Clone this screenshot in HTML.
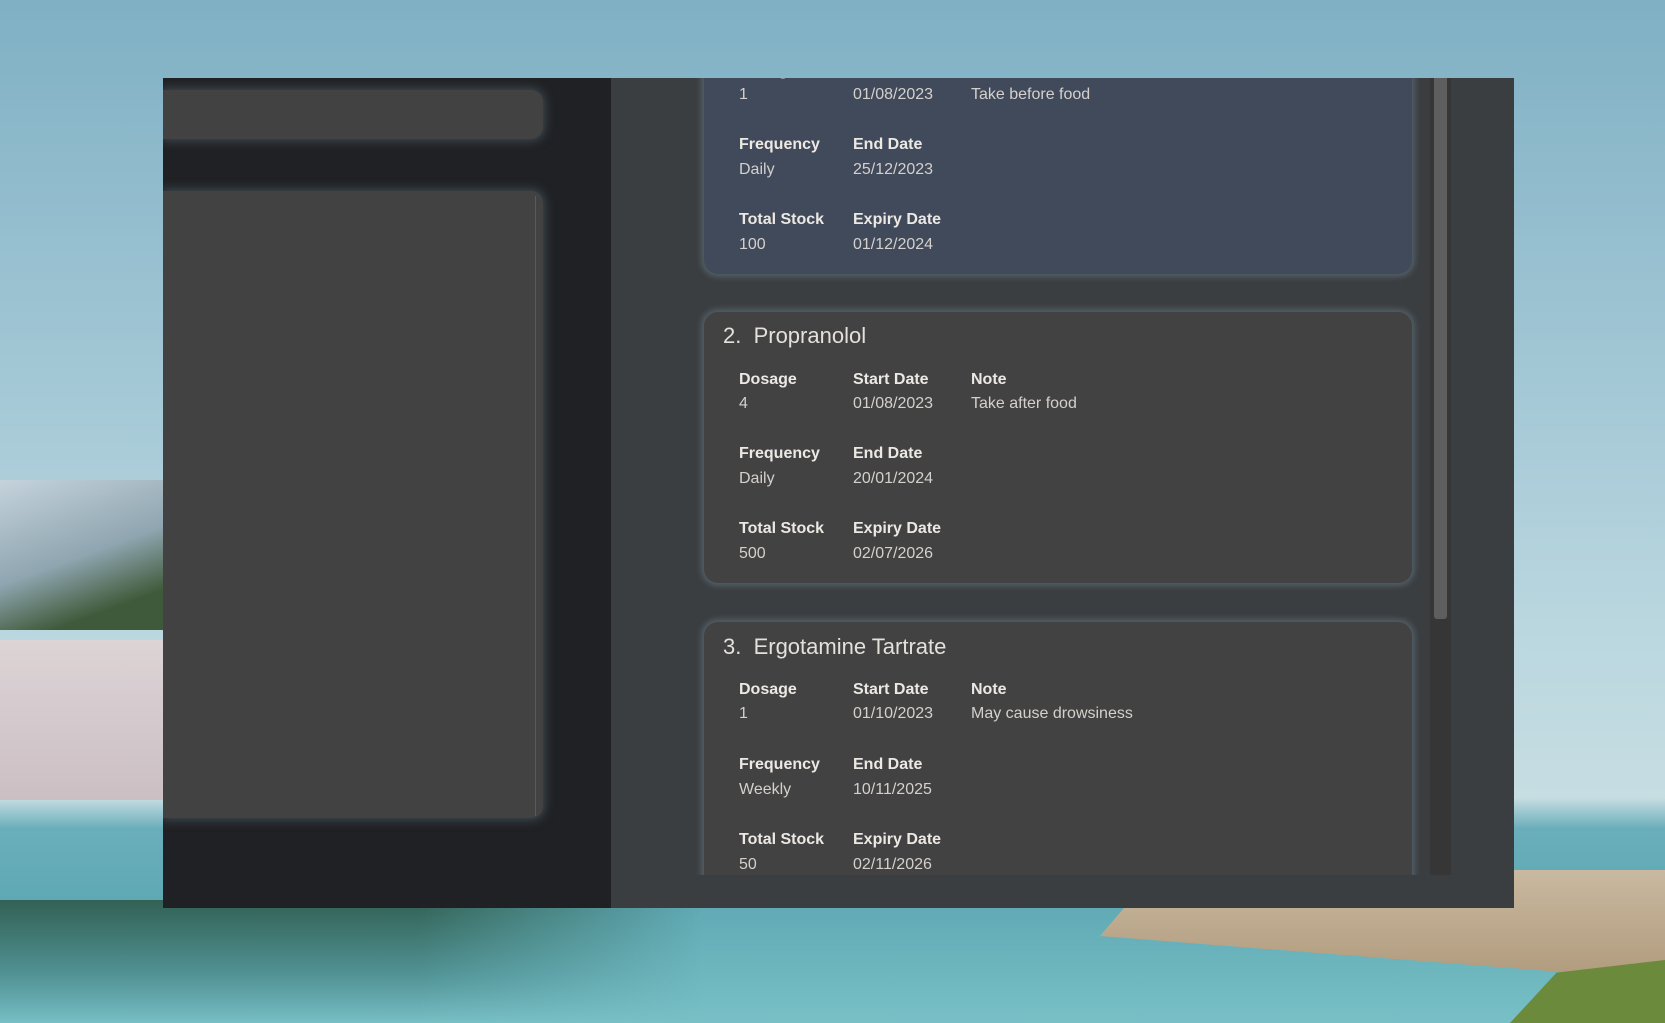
<!DOCTYPE html>
<html><head><meta charset="utf-8"><style>
*{margin:0;padding:0;box-sizing:border-box}
body{width:1665px;height:1023px;overflow:hidden;position:relative;font-family:"Liberation Sans",sans-serif;
background:linear-gradient(180deg,#7fb0c4 0%,#9cc3d2 30%,#b9d6df 60%,#c6dde2 78%,#6aaebb 81%,#5fa9b4 88%,#78c0c6 100%);}
.abs{position:absolute}
.win{left:163px;top:78px;width:1351px;height:830px;overflow:hidden;background:#3b3e41}
.left{left:0;top:0;width:448px;height:830px;background:#202124}
.box{background:#424242;box-shadow:0 0 10px 2px rgba(70,85,95,.8)}
.card{position:absolute;left:93px;width:708px;height:271px;background:#424242;border-radius:14px;box-shadow:0 0 6px 3px rgba(90,105,115,.75)}
.card.sel{background:#414a5a}
.t{position:absolute;left:19px;font-size:22px;color:#e4e0dc;white-space:pre}
.l{position:absolute;font-size:16px;font-weight:bold;color:#ece8e4}
.v{position:absolute;font-size:16px;color:#d4d0cc}
.card .l,.card .v{margin-top:3px}
</style></head><body>
<div class="abs" style="left:0;top:480px;width:170px;height:150px;background:linear-gradient(160deg,#c5d3dc,#8fa5b0 50%,#3f5a3a 80%)"></div>
<div class="abs" style="left:0;top:640px;width:170px;height:160px;background:linear-gradient(180deg,#ddd4d6,#cbbfc4)"></div>
<div class="abs" style="left:0;top:900px;width:700px;height:123px;background:linear-gradient(180deg,rgba(46,90,74,.9),rgba(63,122,120,.6) 60%,rgba(90,166,174,0));-webkit-mask-image:linear-gradient(90deg,#000 60%,transparent)"></div>
<div class="abs" style="left:1100px;top:870px;width:565px;height:110px;background:linear-gradient(180deg,#c9b9a0,#b09a7c);clip-path:polygon(10% 0,100% 0,100% 100%,0 60%)"></div>
<div class="abs" style="left:1510px;top:960px;width:155px;height:63px;background:#6b8a3c;clip-path:polygon(30% 20%,100% 0,100% 100%,0 100%)"></div>
<div class="abs win">
  <div class="abs left">
    <div class="abs box" style="left:0;top:12px;width:380px;height:49px;border-radius:0 12px 12px 0"></div>
    <div class="abs box" style="left:0;top:113px;width:380px;height:627px;border-radius:0 12px 12px 0"></div>
    <div class="abs" style="left:372px;top:118px;width:1px;height:620px;background:#5a5a5a"></div>
  </div>
  <div class="abs" style="left:448px;top:0;width:821px;height:797px;overflow:hidden">
    <div class="card sel" style="top:-75px">
      <div class="l" style="left:35px;top:56px">Dosage</div><div class="v" style="left:35px;top:80px">1</div>
      <div class="l" style="left:149px;top:56px">Start Date</div><div class="v" style="left:149px;top:80px">01/08/2023</div>
      <div class="l" style="left:267px;top:56px">Note</div><div class="v" style="left:267px;top:80px">Take before food</div>
      <div class="l" style="left:35px;top:130px">Frequency</div><div class="v" style="left:35px;top:155px">Daily</div>
      <div class="l" style="left:149px;top:130px">End Date</div><div class="v" style="left:149px;top:155px">25/12/2023</div>
      <div class="l" style="left:35px;top:205px">Total Stock</div><div class="v" style="left:35px;top:230px">100</div>
      <div class="l" style="left:149px;top:205px">Expiry Date</div><div class="v" style="left:149px;top:230px">01/12/2024</div>
    </div>
    <div class="card" style="top:234px">
      <div class="t" style="top:11px">2.  Propranolol</div>
      <div class="l" style="left:35px;top:56px">Dosage</div><div class="v" style="left:35px;top:80px">4</div>
      <div class="l" style="left:149px;top:56px">Start Date</div><div class="v" style="left:149px;top:80px">01/08/2023</div>
      <div class="l" style="left:267px;top:56px">Note</div><div class="v" style="left:267px;top:80px">Take after food</div>
      <div class="l" style="left:35px;top:130px">Frequency</div><div class="v" style="left:35px;top:155px">Daily</div>
      <div class="l" style="left:149px;top:130px">End Date</div><div class="v" style="left:149px;top:155px">20/01/2024</div>
      <div class="l" style="left:35px;top:205px">Total Stock</div><div class="v" style="left:35px;top:230px">500</div>
      <div class="l" style="left:149px;top:205px">Expiry Date</div><div class="v" style="left:149px;top:230px">02/07/2026</div>
    </div>
    <div class="card" style="top:544px">
      <div class="t" style="top:12px">3.  Ergotamine Tartrate</div>
      <div class="l" style="left:35px;top:56px">Dosage</div><div class="v" style="left:35px;top:80px">1</div>
      <div class="l" style="left:149px;top:56px">Start Date</div><div class="v" style="left:149px;top:80px">01/10/2023</div>
      <div class="l" style="left:267px;top:56px">Note</div><div class="v" style="left:267px;top:80px">May cause drowsiness</div>
      <div class="l" style="left:35px;top:131px">Frequency</div><div class="v" style="left:35px;top:156px">Weekly</div>
      <div class="l" style="left:149px;top:131px">End Date</div><div class="v" style="left:149px;top:156px">10/11/2025</div>
      <div class="l" style="left:35px;top:206px">Total Stock</div><div class="v" style="left:35px;top:231px">50</div>
      <div class="l" style="left:149px;top:206px">Expiry Date</div><div class="v" style="left:149px;top:231px">02/11/2026</div>
    </div>
  </div>
  <div class="abs" style="left:1267px;top:0;width:21px;height:797px;background:#363636"></div>
  <div class="abs" style="left:1271px;top:0;width:13px;height:541px;background:#5e5e5e;border-radius:0 0 3px 3px"></div>
</div>
</body></html>
